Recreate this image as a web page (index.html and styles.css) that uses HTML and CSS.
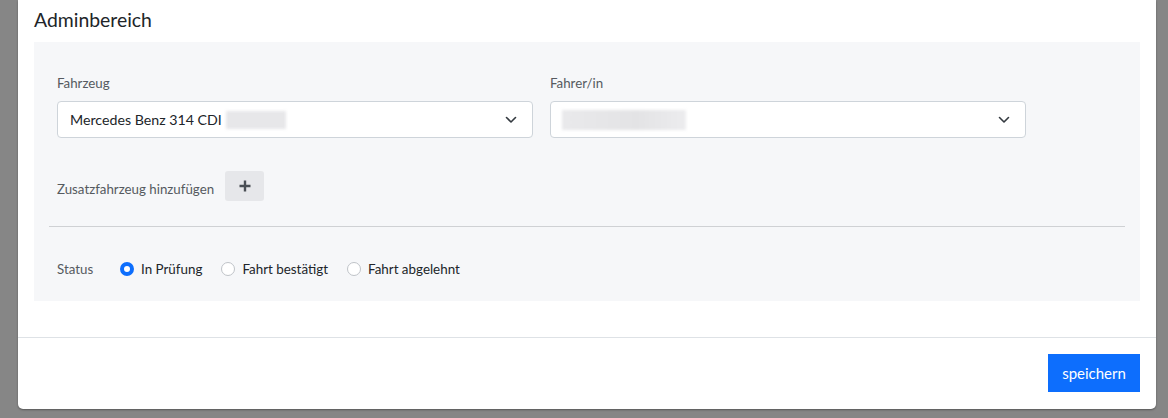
FILE: index.html
```html
<!DOCTYPE html>
<html lang="de">
<head>
<meta charset="utf-8">
<title>Adminbereich</title>
<link rel="stylesheet" href="styles.css">
</head>
<body>
<div class="modal">
  <div class="modal-body">
    <h2 class="title">Adminbereich</h2>
    <div class="panel">
      <div class="fields">
        <div class="field">
          <label class="label">Fahrzeug</label>
          <div class="select">
            <span class="value">Mercedes Benz 314 CDI</span>
            <span class="blur blur-short"></span>
            <svg class="chevron" width="12" height="8" viewBox="0 0 12 8"><polyline points="1.5,1.5 6,6 10.5,1.5" fill="none" stroke="#343a40" stroke-width="1.6" stroke-linecap="round" stroke-linejoin="round"/></svg>
          </div>
        </div>
        <div class="field">
          <label class="label">Fahrer/in</label>
          <div class="select">
            <span class="blur blur-long"></span>
            <svg class="chevron" width="12" height="8" viewBox="0 0 12 8"><polyline points="1.5,1.5 6,6 10.5,1.5" fill="none" stroke="#343a40" stroke-width="1.6" stroke-linecap="round" stroke-linejoin="round"/></svg>
          </div>
        </div>
      </div>
      <div class="add-row">
        <span class="label-inline add-label">Zusatzfahrzeug hinzufügen</span>
        <button class="add-btn" type="button" aria-label="hinzufügen">
          <svg width="14" height="14" viewBox="0 0 14 14"><path d="M7 1.5v11M1.5 7h11" stroke="#4a4f55" stroke-width="2.4" stroke-linecap="butt"/></svg>
        </button>
      </div>
      <hr class="divider">
      <div class="status-row">
        <span class="label-inline status-label">Status</span>
        <span class="radio checked"></span><span class="radio-text">In Prüfung</span>
        <span class="radio"></span><span class="radio-text">Fahrt bestätigt</span>
        <span class="radio"></span><span class="radio-text">Fahrt abgelehnt</span>
      </div>
    </div>
  </div>
  <div class="modal-footer">
    <button class="save" type="button">speichern</button>
  </div>
</div>
</body>
</html>
```
FILE: styles.css
```css
* { box-sizing: border-box; }
html, body { margin: 0; padding: 0; }
body {
  background: #868686;
  font-family: Lato, "Liberation Sans", sans-serif;
  color: #212529;
  width: 1168px;
  height: 418px;
  overflow: hidden;
}
.modal {
  margin-left: 18px;
  width: 1138px;
  height: 409px;
  background: #fff;
  border-radius: 0 0 5px 5px;
  box-shadow: 0 1px 2px rgba(0,0,0,0.35);
  display: flex;
  flex-direction: column;
}
.modal-body {
  padding: 0 16px;
  height: 338px;
  border-bottom: 1px solid #dee2e6;
}
.title {
  margin: 0;
  padding-top: 8px;
  height: 42px;
  font-size: 19.4px;
  font-weight: 400;
  line-height: 24px;
  color: #212529;
}
.panel {
  background: #f6f7f9;
  height: 259px;
  padding: 0 15px;
}
.fields {
  display: flex;
  gap: 17px;
  padding: 32px 8px 0;
}
.field { width: 476px; }
.label {
  display: block;
  font-size: 13.3px;
  line-height: 18px;
  color: #555a60;
  margin-bottom: 9px;
}
.select {
  height: 37px;
  background: #fff;
  border: 1px solid #ced4da;
  border-radius: 4px;
  display: flex;
  align-items: center;
  padding: 0 12px;
}
.value { font-size: 14.2px; color: #212529; }
.blur {
  display: block;
  height: 18px;
  background: #e7e7e9;
  filter: blur(1.5px);
}
.blur-short { width: 60px; margin-left: 4px; }
.blur-long { width: 124px; height: 20px; margin-left: -1px; background: linear-gradient(90deg, #e9e9eb, #e3e3e5 60%, #ececee); }
.chevron { margin-left: auto; margin-right: 3px; }
.add-row {
  display: flex;
  align-items: center;
  padding: 33px 8px 0;
  height: 63px;
}
.label-inline { font-size: 13.3px; color: #555a60; line-height: 18px; }
.add-label { padding-top: 6px; }
.add-btn {
  margin-left: 11px;
  width: 39px;
  height: 30px;
  border: 0;
  border-radius: 3px;
  background: #e6e7ea;
  display: flex;
  align-items: center;
  justify-content: center;
  padding: 0;
}
.divider {
  border: 0;
  border-top: 1px solid #cfd1d4;
  margin: 25px 0 0;
}
.status-row {
  display: flex;
  align-items: center;
  padding: 33px 8px 0;
}
.status-label { width: 63px; }
.radio {
  width: 14px;
  height: 14px;
  border-radius: 50%;
  border: 1px solid #bfc3c8;
  background: #fff;
  margin-right: 7px;
}
.radio.checked {
  border: 4px solid #0d6efd;
  background: #fff;
}
.radio-text {
  font-size: 13.4px;
  color: #212529;
  margin-right: 19px;
  line-height: 18px;
}
.modal-footer {
  display: flex;
  justify-content: flex-end;
  padding: 16px 16px 0;
}
.save {
  width: 92px;
  height: 38px;
  border: 0;
  border-radius: 0;
  background: #0d6efd;
  color: #fff;
  font-family: Lato, "Liberation Sans", sans-serif;
  font-size: 15px;
  padding: 0;
}
```
